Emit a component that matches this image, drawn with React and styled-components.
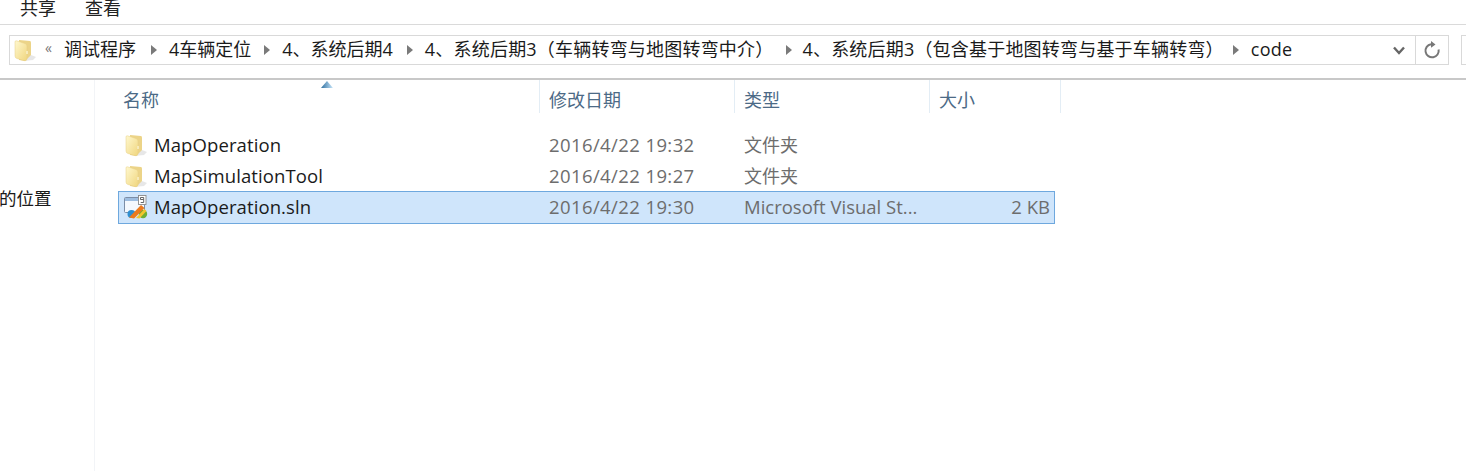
import React from "react";
import styled, { createGlobalStyle } from "styled-components";

const Global = createGlobalStyle`
  html, body { margin: 0; padding: 0; background: #fff; }
`;
const Page = styled.div`
  width: 1466px; height: 471px; overflow: hidden; display: flex; flex-direction: column; background: #fff;
  font-family: "Open Sans", "Noto Sans CJK SC", sans-serif;
`;
const MenuBar = styled.div`
  height: 25px; flex-shrink: 0; box-sizing: border-box; border-bottom: 1px solid #dadada; display: flex; gap: 29px; padding-left: 20px;
  align-items: flex-start; overflow: hidden;
`;
const MenuItem = styled.span`
  font-size: 18px; line-height: 24px; margin-top: -4px; color: #222;
`;
const AddressRow = styled.div`
  height: 55px; flex-shrink: 0; border-bottom: 2px solid #c8c8c8; box-sizing: border-box; display: flex; align-items: flex-start;
  padding: 10px 0 0 9px; overflow: hidden;
`;
const AddressBox = styled.div`
  width: 1440px; flex-shrink: 0; height: 30px; box-sizing: border-box; border: 1px solid #d9d9d9; display: flex; align-items: center;
`;
const Crumbs = styled.div`
  flex: 1; display: flex; align-items: center; padding-left: 3px; min-width: 0; white-space: nowrap;
`;
const Crumb = styled.span`
  font-size: 18px; color: #1a1a1a; line-height: 28px; letter-spacing: ${(p) => p.$track || 0}px; margin-top: -2px;
`;
const Sep = styled.span`
  width: 0; height: 0; border-style: solid; border-width: 5.5px 0 5.5px 6px;
  border-color: transparent transparent transparent #7a7a7a;
  margin: 0 ${(p) => p.$after}px 0 ${(p) => p.$before}px;
`;
const Chevrons = styled.span`
  font-size: 14px; color: #777; margin: -4px 12px 0 8px; line-height: 1;
`;
const DropButton = styled.div`
  width: 32px; flex-shrink: 0; height: 100%; display: flex; align-items: center; justify-content: center; border-right: 1px solid #d9d9d9;
`;
const RefreshButton = styled.div`
  width: 32px; height: 100%; display: flex; align-items: center; justify-content: center; flex-shrink: 0;
`;
const SearchStub = styled.div`
  width: 20px; height: 30px; border: 1px solid #d9d9d9; box-sizing: border-box; margin-left: 12px; flex-shrink: 0;
`;
const Main = styled.div`
  flex: 1; display: flex; min-height: 0;
`;
const Sidebar = styled.aside`
  width: 94px; flex-shrink: 0; border-right: 1px solid #f2f4f7; overflow: hidden;
`;
const SidebarLabel = styled.div`
  font-size: 17.5px; color: #1a1a1a; line-height: 24px; margin-top: 106px; white-space: nowrap; margin-left: -1px;
`;
const Content = styled.section`
  flex: 1; position: relative; min-width: 0;
`;
const SortArrow = styled.svg`
  position: absolute; left: 226px; top: 1px;
`;
const Header = styled.div`
  display: grid; grid-template-columns: 445px 195px 195px 131px; height: 33px; width: 966px;
`;
const HeaderCell = styled.div`
  font-size: 18px; color: #4c6a86; line-height: 41px; padding-left: ${(p) => p.$pad || 9}px;
  border-right: 1px solid #e3edf5; box-sizing: border-box; height: 33px;
`;
const Rows = styled.div`
  margin-top: 16px; margin-left: 23px; width: 937px; display: flex; flex-direction: column;
`;
const Row = styled.div`
  display: grid; grid-template-columns: 421px 195px 195px 126px; align-items: center; height: ${(p) => (p.$selected ? 33 : 31)}px;
  box-sizing: border-box; border: 1px solid ${(p) => (p.$selected ? "#6ea8de" : "transparent")};
  padding-bottom: ${(p) => (p.$selected ? 2 : 0)}px;
  background: ${(p) => (p.$selected ? "#cfe5fb" : "transparent")};
`;
const NameCell = styled.div`
  display: flex; align-items: center; padding-left: 5px; gap: 6px; font-size: 18.5px; color: #1a1a1a; letter-spacing: 0.1px; white-space: nowrap;
  line-height: 28px;
`;
const Cell = styled.div`
  font-size: ${(p) => (p.$cjk ? 18 : 18.5)}px; color: #6d6d6d; padding-left: 9px; white-space: nowrap; overflow: hidden;
  letter-spacing: ${(p) => p.$track || 0}px; line-height: 28px;
  text-align: ${(p) => (p.$right ? "right" : "left")}; padding-right: ${(p) => (p.$right ? 6 : 0)}px;
`;

const Folder = ({ size = 24, id }) => (
  <svg width={size} height={size} viewBox="0 0 24 24">
    <defs>
      <linearGradient id={id} x1="0" x2="1" y1="0" y2="1">
        <stop offset="0" stopColor="#fff8cf" />
        <stop offset="1" stopColor="#f0d67e" />
      </linearGradient>
    </defs>
    <path d="M13 15 L23 19 L20 22 L10 23 Z" fill="#c4c4c4" opacity=".4" />
    <path d="M6 2 L17 3 Q18 3 18 5 L18 17 L12 23 L6 22 Z" fill="#ecd488" />
    <path d="M2 4 Q2 2.5 3.5 2.8 L12 5.5 Q14 6.2 14 8 L14 20 Q14 23 12 22.8 L4 20.5 Q2 20 2 18 Z" fill={`url(#${id})`} stroke="#e6cf85" strokeWidth=".5" />
    <path d="M13 13 L15 13 L15 16 L13 16 Z" fill="#f6eabb" />
  </svg>
);
const SlnIcon = () => (
  <svg width="24" height="24" viewBox="0 0 24 24">
    <rect x="0.5" y="2.5" width="20" height="15" rx="1" fill="#f4f8fd" stroke="#7b8da6" />
    <rect x="1" y="3" width="19" height="3" fill="#9dbde0" />
    <rect x="14.5" y="0.5" width="7.5" height="9" fill="#fff" stroke="#8a8a8a" strokeWidth=".9" />
    <path d="M16.5 2.5h3.2v2h-3.2zM19.7 4.5v3h-3" fill="none" stroke="#555" strokeWidth=".9" />
    <circle cx="7.5" cy="19" r="4" fill="#2f8fd0" />
    <circle cx="19" cy="19" r="4.2" fill="#6fae36" />
    <path d="M5 22.5 L17 10 L20.5 13 L10 23.5 Z" fill="#ec7a1c" />
    <path d="M12 23 L20.5 14 L22.5 16 L15.5 23.5 Z" fill="#f3c52e" />
  </svg>
);

const crumbs = [
  { t: "调试程序", before: 15, after: 12 },
  { t: "4车辆定位", before: 13, after: 12 },
  { t: "4、系统后期4", before: 14, after: 12 },
  { t: "4、系统后期3（车辆转弯与地图转弯中介）", track: 0.2, before: 13, after: 10 },
  { t: "4、系统后期3（包含基于地图转弯与基于车辆转弯）", track: 0.2, before: 9, after: 12 },
  { t: "code", track: 0.2 },
];

export default function App() {
  return (
    <Page>
      <Global />
      <MenuBar>
        <MenuItem>共享</MenuItem>
        <MenuItem>查看</MenuItem>
      </MenuBar>
      <AddressRow>
        <AddressBox>
          <Crumbs>
            <Folder size={24} id="fa" />
            <Chevrons>«</Chevrons>
            {crumbs.map((c, i) => (
              <React.Fragment key={c.t}>
                <Crumb $track={c.track}>{c.t}</Crumb>
                {i < crumbs.length - 1 && <Sep $before={c.before} $after={c.after} />}
              </React.Fragment>
            ))}
          </Crumbs>
          <DropButton>
            <svg width="12" height="9" viewBox="0 0 12 9"><path d="M1 1.5 L6 7 L11 1.5" fill="none" stroke="#666" strokeWidth="2.4" /></svg>
          </DropButton>
          <RefreshButton>
            <svg width="18" height="20" viewBox="0 0 18 20"><path d="M8 4.2 A6.6 6.6 0 1 0 15.6 9.5" fill="none" stroke="#777" strokeWidth="2" /><path d="M8 1 L12.5 4.4 L8 7.8 Z" fill="#777" /></svg>
          </RefreshButton>
        </AddressBox>
        <SearchStub />
      </AddressRow>
      <Main>
        <Sidebar>
          <SidebarLabel>的位置</SidebarLabel>
        </Sidebar>
        <Content>
          <SortArrow width="12" height="7" viewBox="0 0 12 7">
            <defs>
              <linearGradient id="sa" x1="0" x2="1" y1="0" y2="0">
                <stop offset="0" stopColor="#2f6f9f" />
                <stop offset="1" stopColor="#c8e6fa" />
              </linearGradient>
            </defs>
            <path d="M6 0 L12 7 L0 7 Z" fill="url(#sa)" />
          </SortArrow>
          <Header>
            <HeaderCell $pad={28}>名称</HeaderCell>
            <HeaderCell>修改日期</HeaderCell>
            <HeaderCell>类型</HeaderCell>
            <HeaderCell>大小</HeaderCell>
          </Header>
          <Rows>
            <Row>
              <NameCell><Folder id="f1" />MapOperation</NameCell>
              <Cell $track={0.4}>2016/4/22 19:32</Cell>
              <Cell $cjk>文件夹</Cell>
              <Cell />
            </Row>
            <Row>
              <NameCell><Folder id="f2" />MapSimulationTool</NameCell>
              <Cell $track={0.4}>2016/4/22 19:27</Cell>
              <Cell $cjk>文件夹</Cell>
              <Cell />
            </Row>
            <Row $selected>
              <NameCell><SlnIcon />MapOperation.sln</NameCell>
              <Cell $track={0.4}>2016/4/22 19:30</Cell>
              <Cell>Microsoft Visual St...</Cell>
              <Cell $right>2 KB</Cell>
            </Row>
          </Rows>
        </Content>
      </Main>
    </Page>
  );
}
